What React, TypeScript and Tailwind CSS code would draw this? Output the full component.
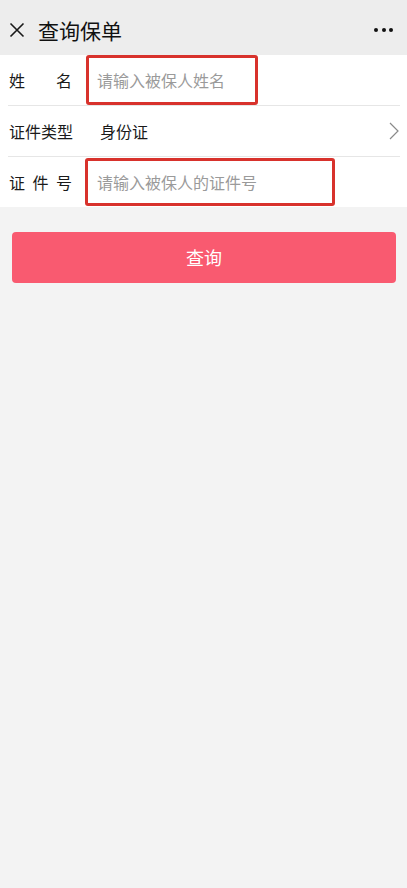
import React from "react";

const font = { fontFamily: '"Noto Sans CJK SC", "Noto Sans", sans-serif' };

function Spread({ chars }: { chars: string[] }) {
  return (
    <span className="flex w-[63px] justify-between text-[16px] text-[#1a1a1a]">
      {chars.map((c, i) => (
        <span key={i}>{c}</span>
      ))}
    </span>
  );
}

export default function App() {
  return (
    <div className="min-h-[888px] w-full bg-[#f3f3f3]" style={font}>
      {/* Header */}
      <div className="flex h-[55px] items-center bg-[#ededed] pl-[9px] pr-[14px] pt-[5px]">
        <svg width="16" height="16" viewBox="0 0 16 16" className="shrink-0">
          <path d="M1.5 1.5 L14.5 14.5 M14.5 1.5 L1.5 14.5" stroke="#1a1a1a" strokeWidth="1.6" fill="none" />
        </svg>
        <div className="ml-[13px] text-[21px] leading-none text-[#111]">查询保单</div>
        <div className="ml-auto flex items-center gap-[3.5px]">
          <span className="h-[4px] w-[4px] rounded-full bg-[#111]" />
          <span className="h-[4px] w-[4px] rounded-full bg-[#111]" />
          <span className="h-[4px] w-[4px] rounded-full bg-[#111]" />
        </div>
      </div>

      {/* Form */}
      <div className="bg-white pl-[8px] pr-[7px]">
        <div className="flex h-[51px] items-center border-b border-[#e6e6e6]">
          <div className="w-[78px] shrink-0 pl-[1px]">
            <Spread chars={["姓", "名"]} />
          </div>
          <div className="flex h-[50px] w-[172px] items-center rounded-[3px] border-[3px] border-[#d8322c] pl-[8px] text-[16px] text-[#9a9a9a]">
            请输入被保人姓名
          </div>
        </div>
        <div className="flex h-[51px] items-center border-b border-[#e6e6e6]">
          <div className="w-[92px] shrink-0 pl-[1px]">
            <span className="text-[16px] text-[#1a1a1a]">证件类型</span>
          </div>
          <span className="text-[16px] text-[#1a1a1a]">身份证</span>
          <svg width="10" height="18" viewBox="0 0 10 18" className="ml-auto mr-[1px]">
            <path d="M1 1 L9 9 L1 17" stroke="#8a8a8a" strokeWidth="1.2" fill="none" />
          </svg>
        </div>
        <div className="flex h-[50px] items-center">
          <div className="w-[77px] shrink-0 pl-[1px]">
            <Spread chars={["证", "件", "号"]} />
          </div>
          <div className="flex h-[48px] w-[250px] items-center rounded-[3px] border-[3px] border-[#d8322c] pl-[9px] text-[16px] text-[#9a9a9a]">
            请输入被保人的证件号
          </div>
        </div>
      </div>

      {/* Button */}
      <div className="ml-[12px] mr-[11px] mt-[25px] flex h-[51px] items-center justify-center rounded-[4px] bg-[#f95a70] text-[18px] text-white">
        查询
      </div>
    </div>
  );
}
